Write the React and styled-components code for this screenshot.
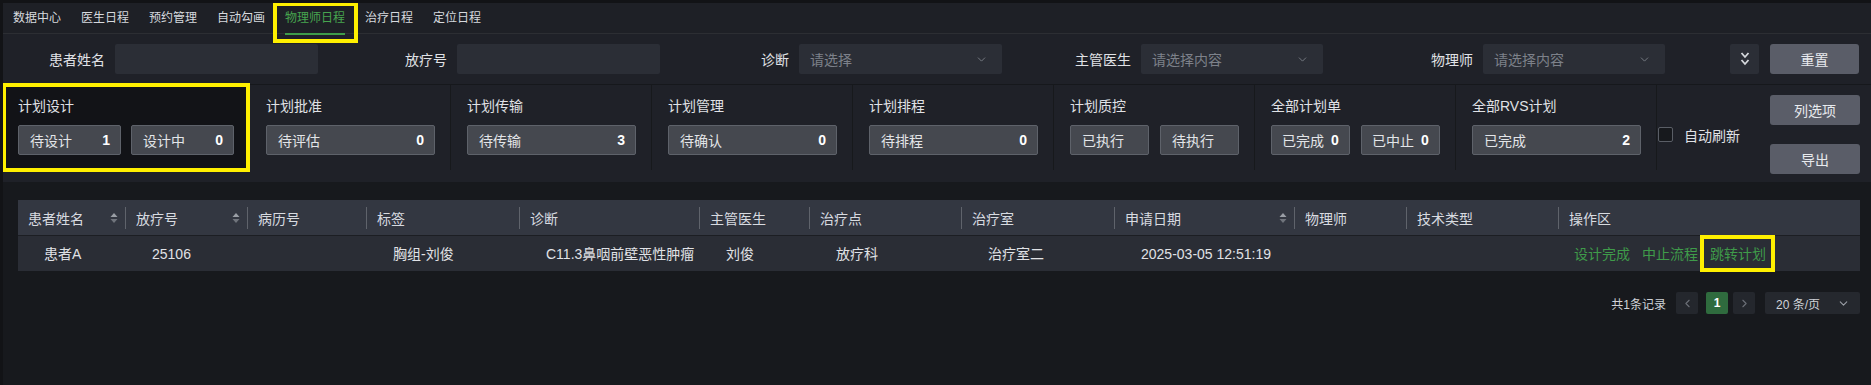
import React from "react";
import styled, { createGlobalStyle } from "styled-components";
import { ChevronDown, ChevronLeft, ChevronRight } from "lucide-react";

const GlobalStyle = createGlobalStyle`
  html, body {
    margin: 0;
    padding: 0;
    background: #121316;
  }
  body {
    font-family: "Liberation Sans", "Noto Sans CJK SC", sans-serif;
    color: #dcdfe4;
    font-size: 14px;
  }
  * {
    box-sizing: border-box;
  }
`;

const Shell = styled.div`
  margin: 3px 0 0 3px;
  width: 1868px;
  height: 382px;
  background: #17191d;
  overflow: hidden;
`;

const Nav = styled.div`
  height: 31px;
  display: flex;
  align-items: center;
  background: #1e2026;
  border-bottom: 1px solid #2c2e33;
`;

const NavItem = styled.div`
  position: relative;
  padding: 0 10px;
  font-size: 12px;
  line-height: 30px;
  color: ${(p) => (p.$active ? "#47a54f" : "#d6d9de")};

  &::after {
    content: "";
    display: ${(p) => (p.$active ? "block" : "none")};
    position: absolute;
    left: 10px;
    right: 10px;
    bottom: -2px;
    height: 2px;
    background: #3f9d4a;
  }
`;

const Highlight = styled.span`
  position: absolute;
  inset: ${(p) => p.$inset};
  border: 4px solid #fff000;
  pointer-events: none;
  z-index: 5;
`;

const FilterRow = styled.div`
  height: 50px;
  display: flex;
  align-items: center;
  background: #1f2128;
`;

const FilterItem = styled.div`
  width: 342px;
  display: flex;
  align-items: center;
`;

const FilterLabel = styled.label`
  width: 102px;
  margin-right: 10px;
  text-align: right;
  font-size: 14px;
  color: #e0e2e6;
`;

const Field = styled.div`
  width: ${(p) => p.$w}px;
  height: 30px;
  display: flex;
  align-items: center;
  justify-content: space-between;
  padding: 0 14px 0 11px;
  background: #2b2e36;
  border-radius: 2px;
  color: #7d818a;
  font-size: 14px;
`;

const FilterTools = styled.div`
  margin-left: auto;
  padding-right: 12px;
  display: flex;
  align-items: center;
  gap: 11px;
`;

const ToggleBtn = styled.div`
  width: 29px;
  height: 30px;
  display: flex;
  align-items: center;
  justify-content: center;
  background: #2b2e36;
  border-radius: 2px;
`;

const Button = styled.div`
  width: ${(p) => p.$w}px;
  height: 30px;
  display: flex;
  align-items: center;
  justify-content: center;
  background: #5a5d68;
  border-radius: 3px;
  color: #e8eaee;
  font-size: 14px;
`;

const StatsRow = styled.div`
  height: 98px;
  display: flex;
  background: #1f2128;
  border-top: 1px solid #16181c;
`;

const StatGroup = styled.div`
  position: relative;
  width: ${(p) => p.$w}px;
  height: 85px;
  padding: 11px 15px 0 ${(p) => (p.$first ? 15 : 16)}px;
  border-right: 1px solid #17191c;
  background: ${(p) => (p.$active ? "#121317" : "transparent")};
`;

const StatTitle = styled.div`
  font-size: 14px;
  line-height: 20px;
  color: #e0e2e6;
`;

const StatBoxes = styled.div`
  display: flex;
  gap: ${(p) => p.$gap}px;
  margin-top: 9px;
`;

const StatBox = styled.div`
  flex: 1;
  height: 30px;
  display: flex;
  align-items: center;
  justify-content: ${(p) => (p.$tight ? "flex-start" : "space-between")};
  gap: 7px;
  padding: 0 10px 0 ${(p) => (p.$tight ? 10 : 11)}px;
  background: #45484f;
  border: 1px solid #5e626a;
  border-radius: 2px;
  font-size: 14px;
  color: #e3e5e8;
  white-space: nowrap;

  b {
    color: #ffffff;
    font-weight: 700;
  }
`;

const SidePanel = styled.div`
  flex: 1;
  display: flex;
  align-items: center;
  padding: 2px 11px 0 1px;
`;

const CheckBox = styled.span`
  width: 15px;
  height: 15px;
  border: 1px solid #5a5e66;
  border-radius: 2px;
  background: #17191d;
`;

const CheckLabel = styled.span`
  margin-left: 11px;
  font-size: 14px;
  color: #e0e2e6;
`;

const ButtonStack = styled.div`
  margin-left: auto;
  display: flex;
  flex-direction: column;
  gap: 19px;
`;

const TableArea = styled.div`
  padding: 18px 11px 0 15px;
`;

const Grid = styled.div`
  display: grid;
  grid-template-columns: 108px 122px 119px 153px 180px 110px 152px 153px 180px 112px 152px 1fr;
`;

const HeadCell = styled.div`
  position: relative;
  height: 35px;
  display: flex;
  align-items: center;
  padding-left: 10px;
  background: #333741;
  font-size: 14px;
  color: #d8dbe0;

  &::after {
    content: "";
    display: ${(p) => (p.$last ? "none" : "block")};
    position: absolute;
    right: 0;
    top: 7px;
    width: 1px;
    height: 22px;
    background: #5f636b;
  }
`;

const SortIcon = styled.svg`
  margin-left: auto;
  margin-right: 8px;
`;

const BodyCell = styled.div`
  height: 36px;
  display: flex;
  align-items: center;
  padding-left: ${(p) => (p.$action ? 15 : 26)}px;
  background: #2a2d35;
  border-top: 1px solid #1c1e23;
  font-size: 14px;
  line-height: 20px;
  color: #e0e2e6;
  white-space: nowrap;
`;

const Links = styled.div`
  display: flex;
  gap: 12px;
`;

const ActionLink = styled.span`
  position: relative;
  color: #3f9b4a;
  font-size: 14px;
  line-height: 20px;
`;

const Pager = styled.div`
  margin-top: 21px;
  display: flex;
  justify-content: flex-end;
  align-items: center;
  font-size: 12px;
  color: #cfd2d7;
`;

const PageBtn = styled.div`
  width: 22px;
  height: 22px;
  display: flex;
  align-items: center;
  justify-content: center;
  margin-left: ${(p) => p.$ml}px;
  background: ${(p) => (p.$active ? "#2f6b3e" : "#24272d")};
  border-radius: 2px;
  color: #ffffff;
  font-weight: 700;
`;

const PageSize = styled.div`
  width: 95px;
  height: 22px;
  margin-left: 10px;
  display: flex;
  align-items: center;
  justify-content: space-between;
  padding: 0 10px 0 11px;
  background: #25282e;
  border-radius: 2px;
  font-size: 12px;
  color: #d0d3d8;
`;

const Sort = () => (
  <SortIcon width="8" height="12" viewBox="0 0 8 12">
    <path d="M0.5 5 L4 1 L7.5 5 Z" fill="#9a9ea5" />
    <path d="M0.5 7 L4 11 L7.5 7 Z" fill="#70747c" />
  </SortIcon>
);

const navItems = ["数据中心", "医生日程", "预约管理", "自动勾画", "物理师日程", "治疗日程", "定位日程"];

const columns = [
  { t: "患者姓名", sort: true },
  { t: "放疗号", sort: true },
  { t: "病历号" },
  { t: "标签" },
  { t: "诊断" },
  { t: "主管医生" },
  { t: "治疗点" },
  { t: "治疗室" },
  { t: "申请日期", sort: true },
  { t: "物理师" },
  { t: "技术类型" },
  { t: "操作区" },
];

const row = ["患者A", "25106", "", "胸组-刘俊", "C11.3鼻咽前壁恶性肿瘤", "刘俊", "放疗科", "治疗室二", "2025-03-05 12:51:19", "", ""];

const App = () => {
  return (
    <Shell>
      <GlobalStyle />
      <Nav>
        {navItems.map((n) => (
          <NavItem key={n} $active={n === "物理师日程"}>
            {n}
            {n === "物理师日程" && <Highlight $inset="-1px -3px -10px -2px" />}
          </NavItem>
        ))}
      </Nav>

      <FilterRow>
        <FilterItem>
          <FilterLabel>患者姓名</FilterLabel>
          <Field $w={203} />
        </FilterItem>
        <FilterItem>
          <FilterLabel>放疗号</FilterLabel>
          <Field $w={203} />
        </FilterItem>
        <FilterItem>
          <FilterLabel>诊断</FilterLabel>
          <Field $w={203}>
            请选择
            <ChevronDown size={13} color="#80848c" strokeWidth={1.6} />
          </Field>
        </FilterItem>
        <FilterItem>
          <FilterLabel>主管医生</FilterLabel>
          <Field $w={182}>
            请选择内容
            <ChevronDown size={13} color="#80848c" strokeWidth={1.6} />
          </Field>
        </FilterItem>
        <FilterItem>
          <FilterLabel>物理师</FilterLabel>
          <Field $w={182}>
            请选择内容
            <ChevronDown size={13} color="#80848c" strokeWidth={1.6} />
          </Field>
        </FilterItem>
        <FilterTools>
          <ToggleBtn>
            <svg width="10" height="16" viewBox="0 0 10 16">
              <polyline points="1.5,2 5,6 8.5,2" fill="none" stroke="#d5d8dd" strokeWidth="1.8" />
              <polyline points="1.5,9 5,13 8.5,9" fill="none" stroke="#d5d8dd" strokeWidth="1.8" />
            </svg>
          </ToggleBtn>
          <Button $w={89}>重置</Button>
        </FilterTools>
      </FilterRow>

      <StatsRow>
        <StatGroup $w={247} $first $active>
          <Highlight $inset="-2px -1px -2px -1px" />
          <StatTitle>计划设计</StatTitle>
          <StatBoxes $gap={10}>
            <StatBox>
              待设计<b>1</b>
            </StatBox>
            <StatBox>
              设计中<b>0</b>
            </StatBox>
          </StatBoxes>
        </StatGroup>
        <StatGroup $w={201}>
          <StatTitle>计划批准</StatTitle>
          <StatBoxes $gap={10}>
            <StatBox>
              待评估<b>0</b>
            </StatBox>
          </StatBoxes>
        </StatGroup>
        <StatGroup $w={201}>
          <StatTitle>计划传输</StatTitle>
          <StatBoxes $gap={10}>
            <StatBox>
              待传输<b>3</b>
            </StatBox>
          </StatBoxes>
        </StatGroup>
        <StatGroup $w={201}>
          <StatTitle>计划管理</StatTitle>
          <StatBoxes $gap={10}>
            <StatBox>
              待确认<b>0</b>
            </StatBox>
          </StatBoxes>
        </StatGroup>
        <StatGroup $w={201}>
          <StatTitle>计划排程</StatTitle>
          <StatBoxes $gap={10}>
            <StatBox>
              待排程<b>0</b>
            </StatBox>
          </StatBoxes>
        </StatGroup>
        <StatGroup $w={201}>
          <StatTitle>计划质控</StatTitle>
          <StatBoxes $gap={11}>
            <StatBox>已执行</StatBox>
            <StatBox>待执行</StatBox>
          </StatBoxes>
        </StatGroup>
        <StatGroup $w={201}>
          <StatTitle>全部计划单</StatTitle>
          <StatBoxes $gap={11}>
            <StatBox $tight>
              已完成<b>0</b>
            </StatBox>
            <StatBox $tight>
              已中止<b>0</b>
            </StatBox>
          </StatBoxes>
        </StatGroup>
        <StatGroup $w={201}>
          <StatTitle>全部RVS计划</StatTitle>
          <StatBoxes $gap={10}>
            <StatBox>
              已完成<b>2</b>
            </StatBox>
          </StatBoxes>
        </StatGroup>
        <SidePanel>
          <CheckBox />
          <CheckLabel>自动刷新</CheckLabel>
          <ButtonStack>
            <Button $w={90}>列选项</Button>
            <Button $w={90}>导出</Button>
          </ButtonStack>
        </SidePanel>
      </StatsRow>

      <TableArea>
        <Grid>
          {columns.map((c, i) => (
            <HeadCell key={c.t} $last={i === columns.length - 1}>
              {c.t}
              {c.sort && <Sort />}
            </HeadCell>
          ))}
          {row.map((v, i) => (
            <BodyCell key={i}>{v}</BodyCell>
          ))}
          <BodyCell $action>
            <Links>
              <ActionLink>设计完成</ActionLink>
              <ActionLink>中止流程</ActionLink>
              <ActionLink>
                跳转计划
                <Highlight $inset="-9px -9px -8px -10px" />
              </ActionLink>
            </Links>
          </BodyCell>
        </Grid>

        <Pager>
          <span>共1条记录</span>
          <PageBtn $ml={10}>
            <ChevronLeft size={13} color="#6b6f77" strokeWidth={2} />
          </PageBtn>
          <PageBtn $ml={8} $active>
            1
          </PageBtn>
          <PageBtn $ml={5}>
            <ChevronRight size={13} color="#6b6f77" strokeWidth={2} />
          </PageBtn>
          <PageSize>
            20 条/页
            <ChevronDown size={13} color="#9a9ea6" strokeWidth={2} />
          </PageSize>
        </Pager>
      </TableArea>
    </Shell>
  );
};

export default App;
